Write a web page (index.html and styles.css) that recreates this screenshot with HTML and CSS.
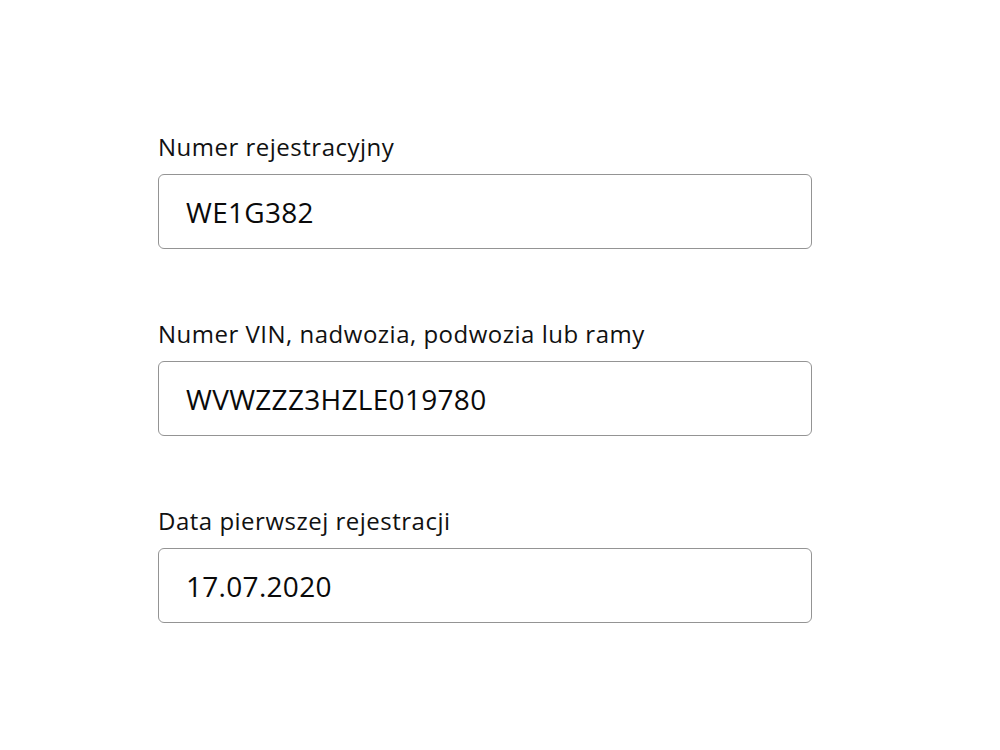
FILE: index.html
```html
<!DOCTYPE html>
<html lang="pl">
<head>
  <meta charset="UTF-8">
  <meta name="viewport" content="width=device-width, initial-scale=1.0">
  <title>Dane pojazdu</title>
  <link rel="stylesheet" href="styles.css">
</head>
<body>

  <form class="vehicle-form">
    <div class="field">
      <label for="plate">Numer rejestracyjny</label>
      <input id="plate" type="text" value="WE1G382" readonly>
    </div>
    <div class="field">
      <label for="vin">Numer VIN, nadwozia, podwozia lub ramy</label>
      <input id="vin" type="text" value="WVWZZZ3HZLE019780" readonly>
    </div>
    <div class="field">
      <label for="regdate">Data pierwszej rejestracji</label>
      <input id="regdate" type="text" value="17.07.2020" readonly>
    </div>
  </form>

</body>
</html>
```

FILE: styles.css
```css
body {
  font-family: 'Open Sans', 'Noto Sans', sans-serif;
  margin: 0;
  padding: 0;
  background-color: #fff;
  color: #111;
}
.vehicle-form {
  width: 654px;
  margin: 0 0 0 158px;
  padding-top: 131px;
  display: flex;
  flex-direction: column;
  gap: 69px;
}
.field {
  display: flex;
  flex-direction: column;
}
label {
  font-size: 24px;
  line-height: 32px;
  letter-spacing: 0.5px;
  margin-bottom: 11px;
}
input {
  box-sizing: border-box;
  height: 75px;
  width: 100%;
  padding: 0 27px;
  font-family: inherit;
  font-size: 28px;
  letter-spacing: 0.3px;
  color: #0a0a0a;
  border: 1px solid #949494;
  border-radius: 6px;
  background: #fff;
  outline: none;
}
```
